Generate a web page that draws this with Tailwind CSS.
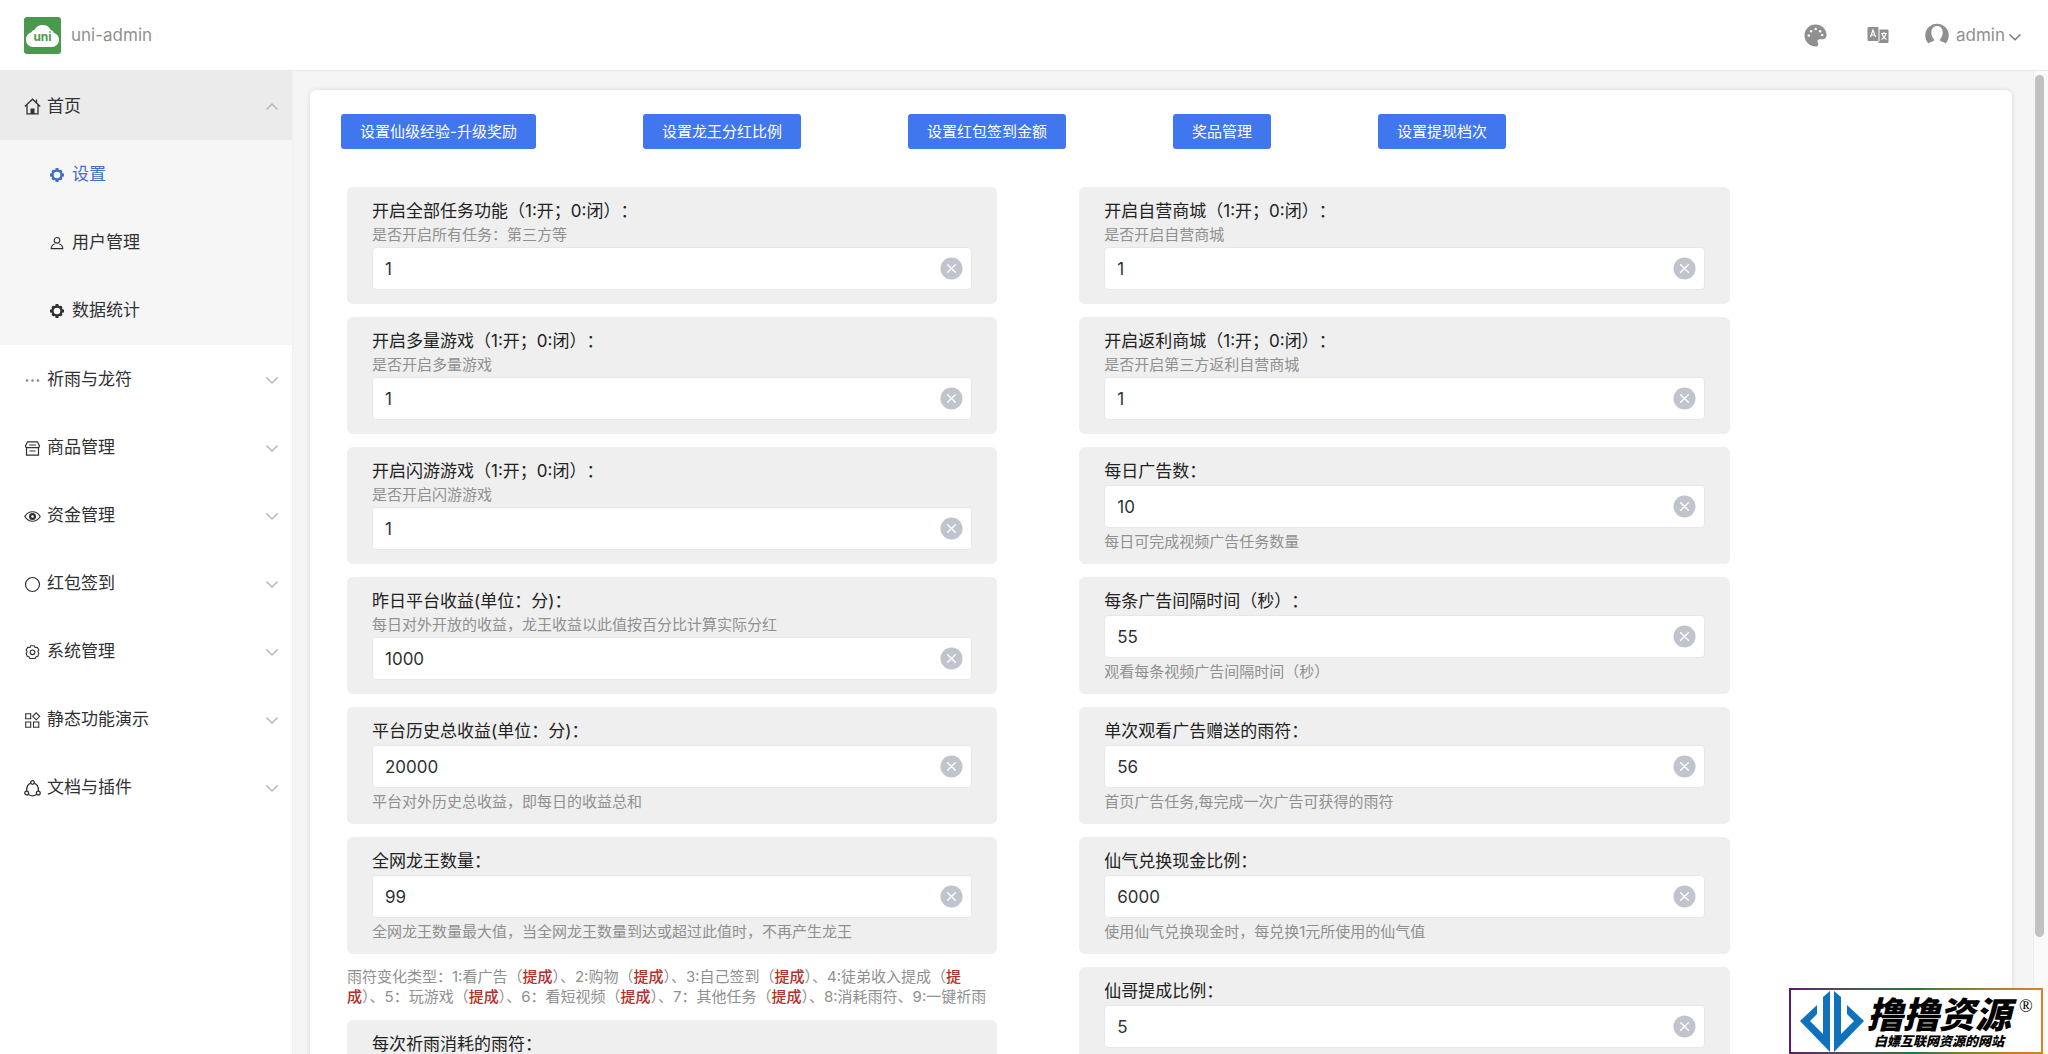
<!DOCTYPE html>
<html lang="zh-CN">
<head>
<meta charset="utf-8">
<title>uni-admin</title>
<script src="https://cdn.jsdelivr.net/npm/@tailwindcss/browser@4"></script>
</head>
<body class="flex h-screen flex-col overflow-hidden bg-[#f5f5f5] font-['Inter','Noto_Sans_CJK_SC',sans-serif] text-[17px] text-[#303133]">

<svg class="hidden" aria-hidden="true">
  <symbol id="down" viewBox="0 0 14 14"><path d="M1.5 4.5 7 10l5.500-5.500" fill="none" stroke="currentColor" stroke-width="1.300"/></symbol>
  <symbol id="clear" viewBox="0 0 24 24"><circle cx="12" cy="12" r="11.500" fill="#c0c4cc"/><path d="m8 8 8 8m0-8-8 8" stroke="#fff" stroke-width="1.400" stroke-linecap="round"/></symbol>
  <symbol id="gear" viewBox="0 0 16 16"><circle cx="8" cy="8" r="5.200" fill="none" stroke="currentColor" stroke-width="2.800"/><path d="M6.300 0h3.400v3H6.300zM6.300 13h3.400v3H6.300zM0 6.300h3v3.400H0zM13 6.300h3v3.400h-3zM1.600 3.700l2.100-2.100 2 2-2.100 2.100zM10.300 12.400l2.100-2.100 2 2-2.100 2.100zM1.600 12.300l2.100 2.100 2-2-2.100-2.100zM10.300 3.600l2.100 2.100 2-2-2.100-2.100z" fill="currentColor"/></symbol>
</svg>

<header class="flex h-[71px] shrink-0 items-center border-b border-[#e8e8e8] bg-white pr-[26px] pl-6 text-[#909090]">
  <a href="#" class="flex items-center gap-2.5">
    <svg class="size-[37px]" viewBox="0 0 37 37" role="img" aria-label="uni">
      <rect width="37" height="37" rx="3" fill="#4a994c"/>
      <path d="M9 29a6.500 6.500 0 0 1-1.200-12.800C8.500 15 9.700 14 11.300 13.400A8.200 8.200 0 0 1 26 13.600c1.600.5 2.800 1.600 3.300 3A6.300 6.300 0 0 1 28 29z" fill="#fff" stroke="#fff" stroke-width="2" stroke-linejoin="round"/>
      <text x="18.500" y="24" text-anchor="middle" font-family="Inter, sans-serif" font-size="12" font-weight="700" fill="#4a994c">uni</text>
    </svg>
    <span class="pt-0.5">uni-admin</span>
  </a>
  <nav class="ml-auto flex items-center">
    <button type="button" aria-label="主题" class="mr-10">
      <svg class="size-[23px]" viewBox="0 0 24 24"><path fill="#8f8f8f" d="M12 .5C5.600.5.500 5.500.500 11.800S5.600 23.500 12 23.500c1.700 0 2.900-1 2.900-2.500 0-1.300-.8-1.900-.8-3 0-1.300 1-2.200 2.400-2.200h3c2.600 0 4-1.800 4-4.400C23.500 5 18.400.500 12 .500z"/><g fill="#fff"><circle cx="5" cy="12" r="1.300"/><circle cx="7.500" cy="7.500" r="1.300"/><circle cx="12.200" cy="5.300" r="1.300"/><circle cx="16.800" cy="7.500" r="1.300"/><circle cx="19" cy="11.500" r="1.300"/></g></svg>
    </button>
    <button type="button" aria-label="语言" class="mr-9">
      <svg class="size-[22px]" viewBox="0 0 22 22"><path fill="#8f8f8f" d="M1.500 3h9a1 1 0 0 1 1 1v13h-10a1 1 0 0 1-1-1V4a1 1 0 0 1 1-1zM12.500 5.500h8a1 1 0 0 1 1 1V18a1 1 0 0 1-1 1H10.500l2-2z"/><path d="m3.500 13 2.500-7 2.500 7M4.500 11h3M14 9.500h6M17 8v1.500M15 9.500c.5 2.500 2 4.500 4.500 6M19 9.500c-.5 2.500-2 4.500-4.500 6" fill="none" stroke="#fff" stroke-width="1.200"/></svg>
    </button>
    <button type="button" class="flex items-center">
      <svg class="mr-[7px] size-6" viewBox="0 0 24 24" aria-hidden="true"><path fill="#8f8f8f" d="M3.500 20.500A11.700 11.700 0 1 1 20.500 20.500c-1.200-1.300-3-1.600-4.700-2.200-.9-.3-1-1.800-.4-2.600 1.500-1.500 2.300-3.700 2.300-6.200 0-4-2.300-6.500-5.700-6.500S6.300 5.500 6.300 9.500c0 2.500.8 4.700 2.300 6.200.6.800.5 2.300-.4 2.600-1.700.6-3.500.9-4.700 2.200z"/></svg>
      <span class="pt-0.5">admin</span>
      <svg class="mt-1 ml-[3px] size-3.5" viewBox="0 0 14 14" aria-hidden="true"><path d="M1.500 4.500 7 9.800l5.500-5.300" fill="none" stroke="#777" stroke-width="1.500"/></svg>
    </button>
  </nav>
</header>

<div class="flex min-h-0 flex-1">
  <aside class="w-[293px] shrink-0 border-r border-[#f0f0f0] bg-white">
    <ul>
      <li>
        <a href="#" class="flex h-[69px] items-center bg-[#ebebeb] pt-0.5 pr-[13px] pl-6">
          <svg class="mr-1.5 size-[17px]" viewBox="0 0 17 17"><path d="M.8 8.500 8.500 1.200l7.700 7.300M3 7v8.800h11V7M12.500 1.500v3" fill="none" stroke="currentColor" stroke-width="1.300"/><path d="M6.500 16v-5.500h4V16z" fill="currentColor"/></svg>
          首页
          <svg class="ml-auto size-3.5 rotate-180 text-[#b4b4b4]"><use href="#down"/></svg>
        </a>
        <ul class="bg-[#f6f6f6] pb-px">
          <li><a href="#" class="flex h-[68px] items-center pt-0.5 pl-[50px] text-[#3f6fc4]"><svg class="mr-2 size-3.5"><use href="#gear"/></svg>设置</a></li>
          <li><a href="#" class="flex h-[68px] items-center pt-0.5 pl-[50px]"><svg class="mr-2 size-3.5" viewBox="0 0 14 14"><circle cx="7" cy="4.300" r="2.800" fill="none" stroke="currentColor" stroke-width="1.100"/><path d="M4.800 8C2.500 8.700 1.200 10 1.200 12.600h11.600c0-2.600-1.300-3.900-3.600-4.600" fill="none" stroke="currentColor" stroke-width="1.100"/></svg>用户管理</a></li>
          <li><a href="#" class="flex h-[68px] items-center pt-0.5 pl-[50px]"><svg class="mr-2 size-3.5"><use href="#gear"/></svg>数据统计</a></li>
        </ul>
      </li>
      <li><a href="#" class="flex h-[68px] items-center pt-0.5 pr-[13px] pl-6">
        <svg class="mr-1.5 size-[17px]" viewBox="0 0 17 17"><g fill="#888"><circle cx="3" cy="8.500" r="1.300"/><circle cx="8.500" cy="8.500" r="1.300"/><circle cx="14" cy="8.500" r="1.300"/></g></svg>
        祈雨与龙符<svg class="ml-auto size-3.5 text-[#b4b4b4]"><use href="#down"/></svg></a></li>
      <li><a href="#" class="flex h-[68px] items-center pt-0.5 pr-[13px] pl-6">
        <svg class="mr-1.5 size-[17px]" viewBox="0 0 17 17"><path d="M3.500 1.800h10l2 4.200c0 1.200-.7 1.700-1.500 1.700H3c-.8 0-1.500-.5-1.500-1.700zM2.500 7.700v7.500h12V7.700M5.500 11h6M5 5h7" fill="none" stroke="currentColor" stroke-width="1.200"/></svg>
        商品管理<svg class="ml-auto size-3.5 text-[#b4b4b4]"><use href="#down"/></svg></a></li>
      <li><a href="#" class="flex h-[68px] items-center pt-0.5 pr-[13px] pl-6">
        <svg class="mr-1.5 size-[17px]" viewBox="0 0 17 17"><path d="M.8 8.500c3.800-6.300 11.600-6.300 15.400 0-3.800 6.300-11.600 6.300-15.400 0z" fill="none" stroke="currentColor" stroke-width="1.200"/><circle cx="8.500" cy="8.500" r="2.400" fill="none" stroke="currentColor" stroke-width="2.200"/></svg>
        资金管理<svg class="ml-auto size-3.5 text-[#b4b4b4]"><use href="#down"/></svg></a></li>
      <li><a href="#" class="flex h-[68px] items-center pt-0.5 pr-[13px] pl-6">
        <svg class="mr-1.5 size-[17px]" viewBox="0 0 17 17"><circle cx="8.500" cy="8.500" r="7" fill="none" stroke="currentColor" stroke-width="1.200"/></svg>
        红包签到<svg class="ml-auto size-3.5 text-[#b4b4b4]"><use href="#down"/></svg></a></li>
      <li><a href="#" class="flex h-[68px] items-center pt-0.5 pr-[13px] pl-6">
        <svg class="mr-1.5 size-[17px]" viewBox="0 0 17 17"><path d="M6.700 1.800h3.600l.8 1.700 2.100-.2 1.600 2.600-.9 1.600.9 2-.9 2.700-1.900.5-.9 1.800H5.900L5 12.700l-1.900-.5-.9-2.700.9-2-.9-1.600 1.600-2.600 2.100.2z" fill="none" stroke="currentColor" stroke-width="1.100" stroke-linejoin="round"/><circle cx="8.500" cy="8.300" r="2.300" fill="none" stroke="currentColor" stroke-width="1.100"/></svg>
        系统管理<svg class="ml-auto size-3.5 text-[#b4b4b4]"><use href="#down"/></svg></a></li>
      <li><a href="#" class="flex h-[68px] items-center pt-0.5 pr-[13px] pl-6">
        <svg class="mr-1.5 size-[17px]" viewBox="0 0 17 17"><path d="M1.700 1.700h5v5h-5zM1.700 10h5v5.300h-5zM9.500 10h5.300v5.300H9.500zM12.200.8l3.500 3.500-3.500 3.500-3.500-3.500z" fill="none" stroke="currentColor" stroke-width="1.100"/></svg>
        静态功能演示<svg class="ml-auto size-3.5 text-[#b4b4b4]"><use href="#down"/></svg></a></li>
      <li><a href="#" class="flex h-[68px] items-center pt-0.5 pr-[13px] pl-6">
        <svg class="mr-1.5 size-[17px]" viewBox="0 0 17 17"><g fill="none" stroke="currentColor" stroke-width="1.300"><circle cx="8.500" cy="2.500" r="1.800"/><circle cx="2.700" cy="13" r="1.900"/><circle cx="14.300" cy="13" r="1.900"/><path d="M6.700 3.200C4 4.200 2.500 7 2.600 11M10.300 3.200c2.700 1 4.200 3.800 4.100 7.800M4.500 14.500c2.500 1.700 5.500 1.700 8 0"/></g></svg>
        文档与插件<svg class="ml-auto size-3.5 text-[#b4b4b4]"><use href="#down"/></svg></a></li>
    </ul>
  </aside>

  <main class="min-w-0 flex-1 overflow-hidden pt-[19px] pr-[21px] pl-[17px]">
    <div class="rounded-md bg-white px-[31px] pt-6 pb-8 shadow-[0_0_5px_rgba(0,0,0,0.12)]">
      <div class="flex gap-[107px] text-[15px] leading-[35px] text-white">
        <button type="button" class="rounded-[3px] bg-[#4076ee] px-[19px]">设置仙级经验-升级奖励</button>
        <button type="button" class="rounded-[3px] bg-[#4076ee] px-[19px]">设置龙王分红比例</button>
        <button type="button" class="rounded-[3px] bg-[#4076ee] px-[19px]">设置红包签到金额</button>
        <button type="button" class="rounded-[3px] bg-[#4076ee] px-[19px]">奖品管理</button>
        <button type="button" class="rounded-[3px] bg-[#4076ee] px-[19px]">设置提现档次</button>
      </div>

      <form class="mt-[38px] ml-1.5 grid w-[84.300%] grid-cols-2 items-start gap-x-[82px]">
        <div class="flex flex-col gap-[13px]">
          <div class="flex min-h-[117px] flex-col rounded-md bg-[#efefef] px-[25px] py-3">
            <label for="task" class="leading-6 text-[#222] [text-spacing-trim:space-all]">开启全部任务功能（1:开；0:闭）：</label>
            <p class="my-0.5 text-[15px] leading-5 text-[#909090]">是否开启所有任务：第三方等</p>
            <div class="flex h-[43px] items-center rounded border border-[#e8e8e8] bg-white pr-2"><input id="task" value="1" class="min-w-0 flex-1 pt-0.5 pl-3 outline-none"><button type="button" aria-label="清除"><svg class="size-[23px]"><use href="#clear"/></svg></button></div>
          </div>
          <div class="flex min-h-[117px] flex-col rounded-md bg-[#efefef] px-[25px] py-3">
            <label for="duoliang" class="leading-6 text-[#222] [text-spacing-trim:space-all]">开启多量游戏（1:开；0:闭）：</label>
            <p class="my-0.5 text-[15px] leading-5 text-[#909090]">是否开启多量游戏</p>
            <div class="flex h-[43px] items-center rounded border border-[#e8e8e8] bg-white pr-2"><input id="duoliang" value="1" class="min-w-0 flex-1 pt-0.5 pl-3 outline-none"><button type="button" aria-label="清除"><svg class="size-[23px]"><use href="#clear"/></svg></button></div>
          </div>
          <div class="flex min-h-[117px] flex-col rounded-md bg-[#efefef] px-[25px] py-3">
            <label for="shanyou" class="leading-6 text-[#222] [text-spacing-trim:space-all]">开启闪游游戏（1:开；0:闭）：</label>
            <p class="my-0.5 text-[15px] leading-5 text-[#909090]">是否开启闪游游戏</p>
            <div class="flex h-[43px] items-center rounded border border-[#e8e8e8] bg-white pr-2"><input id="shanyou" value="1" class="min-w-0 flex-1 pt-0.5 pl-3 outline-none"><button type="button" aria-label="清除"><svg class="size-[23px]"><use href="#clear"/></svg></button></div>
          </div>
          <div class="flex min-h-[117px] flex-col rounded-md bg-[#efefef] px-[25px] py-3">
            <label for="yesterday" class="leading-6 text-[#222]">昨日平台收益(单位：分)：</label>
            <p class="my-0.5 text-[15px] leading-5 text-[#909090]">每日对外开放的收益，龙王收益以此值按百分比计算实际分红</p>
            <div class="flex h-[43px] items-center rounded border border-[#e8e8e8] bg-white pr-2"><input id="yesterday" value="1000" class="min-w-0 flex-1 pt-0.5 pl-3 outline-none"><button type="button" aria-label="清除"><svg class="size-[23px]"><use href="#clear"/></svg></button></div>
          </div>
          <div class="flex min-h-[117px] flex-col rounded-md bg-[#efefef] px-[25px] py-3">
            <label for="history" class="mb-0.5 leading-6 text-[#222]">平台历史总收益(单位：分)：</label>
            <div class="flex h-[43px] items-center rounded border border-[#e8e8e8] bg-white pr-2"><input id="history" value="20000" class="min-w-0 flex-1 pt-0.5 pl-3 outline-none"><button type="button" aria-label="清除"><svg class="size-[23px]"><use href="#clear"/></svg></button></div>
            <p class="mt-1 text-[15px] leading-5 text-[#909090]">平台对外历史总收益，即每日的收益总和</p>
          </div>
          <div class="flex min-h-[117px] flex-col rounded-md bg-[#efefef] px-[25px] py-3">
            <label for="dragons" class="mb-0.5 leading-6 text-[#222]">全网龙王数量：</label>
            <div class="flex h-[43px] items-center rounded border border-[#e8e8e8] bg-white pr-2"><input id="dragons" value="99" class="min-w-0 flex-1 pt-0.5 pl-3 outline-none"><button type="button" aria-label="清除"><svg class="size-[23px]"><use href="#clear"/></svg></button></div>
            <p class="mt-1 text-[15px] leading-5 text-[#909090]">全网龙王数量最大值，当全网龙王数量到达或超过此值时，不再产生龙王</p>
          </div>
          <p class="text-[15px] leading-5 whitespace-nowrap text-[#909090]">雨符变化类型：1:看广告（<b class="font-medium text-[#b0302c]">提成</b>）、2:购物（<b class="font-medium text-[#b0302c]">提成</b>）、3:自己签到（<b class="font-medium text-[#b0302c]">提成</b>）、4:徒弟收入提成（<b class="font-medium text-[#b0302c]">提<br>成</b>）、5：玩游戏（<b class="font-medium text-[#b0302c]">提成</b>）、6：看短视频（<b class="font-medium text-[#b0302c]">提成</b>）、7：其他任务（<b class="font-medium text-[#b0302c]">提成</b>）、8:消耗雨符、9:一键祈雨</p>
          <div class="flex min-h-[117px] flex-col rounded-md bg-[#efefef] px-[25px] py-3">
            <label for="pray" class="mb-0.5 leading-6 text-[#222]">每次祈雨消耗的雨符：</label>
            <div class="flex h-[43px] items-center rounded border border-[#e8e8e8] bg-white pr-2"><input id="pray" class="min-w-0 flex-1 pt-0.5 pl-3 outline-none"></div>
          </div>
        </div>

        <div class="flex flex-col gap-[13px]">
          <div class="flex min-h-[117px] flex-col rounded-md bg-[#efefef] px-[25px] py-3">
            <label for="mall" class="leading-6 text-[#222] [text-spacing-trim:space-all]">开启自营商城（1:开；0:闭）：</label>
            <p class="my-0.5 text-[15px] leading-5 text-[#909090]">是否开启自营商城</p>
            <div class="flex h-[43px] items-center rounded border border-[#e8e8e8] bg-white pr-2"><input id="mall" value="1" class="min-w-0 flex-1 pt-0.5 pl-3 outline-none"><button type="button" aria-label="清除"><svg class="size-[23px]"><use href="#clear"/></svg></button></div>
          </div>
          <div class="flex min-h-[117px] flex-col rounded-md bg-[#efefef] px-[25px] py-3">
            <label for="rebate" class="leading-6 text-[#222] [text-spacing-trim:space-all]">开启返利商城（1:开；0:闭）：</label>
            <p class="my-0.5 text-[15px] leading-5 text-[#909090]">是否开启第三方返利自营商城</p>
            <div class="flex h-[43px] items-center rounded border border-[#e8e8e8] bg-white pr-2"><input id="rebate" value="1" class="min-w-0 flex-1 pt-0.5 pl-3 outline-none"><button type="button" aria-label="清除"><svg class="size-[23px]"><use href="#clear"/></svg></button></div>
          </div>
          <div class="flex min-h-[117px] flex-col rounded-md bg-[#efefef] px-[25px] py-3">
            <label for="ads" class="mb-0.5 leading-6 text-[#222]">每日广告数：</label>
            <div class="flex h-[43px] items-center rounded border border-[#e8e8e8] bg-white pr-2"><input id="ads" value="10" class="min-w-0 flex-1 pt-0.5 pl-3 outline-none"><button type="button" aria-label="清除"><svg class="size-[23px]"><use href="#clear"/></svg></button></div>
            <p class="mt-1 text-[15px] leading-5 text-[#909090]">每日可完成视频广告任务数量</p>
          </div>
          <div class="flex min-h-[117px] flex-col rounded-md bg-[#efefef] px-[25px] py-3">
            <label for="interval" class="mb-0.5 leading-6 text-[#222] [text-spacing-trim:space-all]">每条广告间隔时间（秒）：</label>
            <div class="flex h-[43px] items-center rounded border border-[#e8e8e8] bg-white pr-2"><input id="interval" value="55" class="min-w-0 flex-1 pt-0.5 pl-3 outline-none"><button type="button" aria-label="清除"><svg class="size-[23px]"><use href="#clear"/></svg></button></div>
            <p class="mt-1 text-[15px] leading-5 text-[#909090]">观看每条视频广告间隔时间（秒）</p>
          </div>
          <div class="flex min-h-[117px] flex-col rounded-md bg-[#efefef] px-[25px] py-3">
            <label for="gift" class="mb-0.5 leading-6 text-[#222]">单次观看广告赠送的雨符：</label>
            <div class="flex h-[43px] items-center rounded border border-[#e8e8e8] bg-white pr-2"><input id="gift" value="56" class="min-w-0 flex-1 pt-0.5 pl-3 outline-none"><button type="button" aria-label="清除"><svg class="size-[23px]"><use href="#clear"/></svg></button></div>
            <p class="mt-1 text-[15px] leading-5 text-[#909090]">首页广告任务,每完成一次广告可获得的雨符</p>
          </div>
          <div class="flex min-h-[117px] flex-col rounded-md bg-[#efefef] px-[25px] py-3">
            <label for="cash" class="mb-0.5 leading-6 text-[#222]">仙气兑换现金比例：</label>
            <div class="flex h-[43px] items-center rounded border border-[#e8e8e8] bg-white pr-2"><input id="cash" value="6000" class="min-w-0 flex-1 pt-0.5 pl-3 outline-none"><button type="button" aria-label="清除"><svg class="size-[23px]"><use href="#clear"/></svg></button></div>
            <p class="mt-1 text-[15px] leading-5 text-[#909090]">使用仙气兑换现金时，每兑换1元所使用的仙气值</p>
          </div>
          <div class="flex min-h-[117px] flex-col rounded-md bg-[#efefef] px-[25px] py-3">
            <label for="brother" class="mb-0.5 leading-6 text-[#222]">仙哥提成比例：</label>
            <div class="flex h-[43px] items-center rounded border border-[#e8e8e8] bg-white pr-2"><input id="brother" value="5" class="min-w-0 flex-1 pt-0.5 pl-3 outline-none"><button type="button" aria-label="清除"><svg class="size-[23px]"><use href="#clear"/></svg></button></div>
          </div>
        </div>
      </form>
    </div>
  </main>

  <div class="w-[15px] shrink-0 border-l border-[#ededed] bg-[#fafafa] pt-1 pr-1 pl-px" aria-hidden="true">
    <div class="h-[88%] rounded-full bg-[#c1c1c1]"></div>
  </div>
</div>

<div class="fixed right-[5px] bottom-0 bg-linear-to-r from-[#5c1a68] via-[#1d7a3c] to-[#e08020] p-0.5">
  <div class="flex h-[62px] w-[250px] items-center bg-white pl-2 text-black">
    <svg class="h-[62px] w-[66px] shrink-0" viewBox="0 0 66 62" aria-hidden="true">
      <g fill="#0f72bb"><path d="M31 1v61L1 31 18 15v9l-7 7 13 13V7z"/><path d="M35 1v61l30-31-17-16v9l7 7-13 13V7z"/></g>
    </svg>
    <div class="ml-0.5 pt-1 italic">
      <div class="text-[36px] leading-9 font-black">撸撸资源</div>
      <div class="text-center text-[13px] leading-4 font-black">白嫖互联网资源的网站</div>
    </div>
    <span class="self-start pt-2 pl-2 font-['Liberation_Serif',serif] text-[18px] leading-4">®</span>
  </div>
</div>
</body>
</html>
